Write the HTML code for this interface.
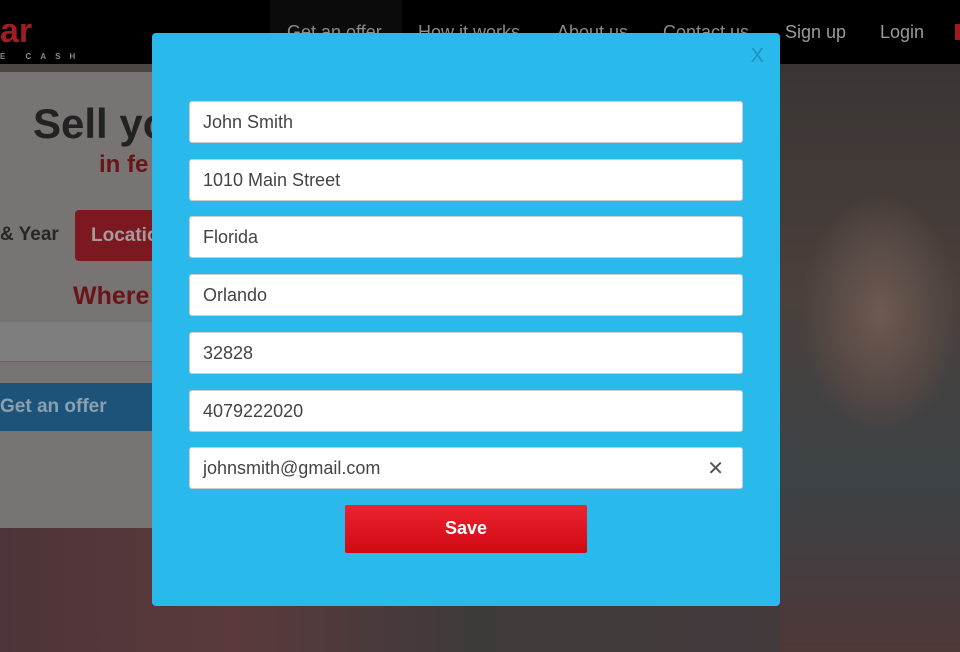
<!DOCTYPE html>
<html><head><meta charset="utf-8"><style>
*{margin:0;padding:0;box-sizing:border-box}
body{width:960px;height:652px;overflow:hidden;position:relative;font-family:"Liberation Sans",Arial,sans-serif;background:#3a3434}
.bg{position:absolute;left:0;top:64px;width:960px;height:588px;background:linear-gradient(180deg,#4b4542 0%,#5a4c48 60%,#4a3536 100%)}
.photo{position:absolute;left:760px;top:64px;width:200px;height:588px;background:radial-gradient(ellipse 80px 120px at 120px 250px,#6e5a50 0%,#574a45 60%,rgba(0,0,0,0) 100%),linear-gradient(180deg,#3a3533 0%,#4a403c 40%,#3c4246 70%,#4e3838 100%)}
.bottom{position:absolute;left:0;top:528px;width:780px;height:124px;background:linear-gradient(90deg,#4e3438 0%,#5a3a3c 30%,#3f3a3a 60%,#433a3c 100%)}
.panel{position:absolute;left:0;top:72px;width:780px;height:456px;background:#777473}
.nav{position:absolute;left:0;top:0;width:960px;height:64px;background:#000}
.nav span{position:absolute;top:22px;font-size:18px;color:#8a8a8a}
.logo{position:absolute;left:0;top:12px;font-size:34px;font-weight:bold;color:#a21c26}
.logo2{position:absolute;left:0;top:52px;font-size:8px;letter-spacing:9px;color:#888;font-weight:bold}
.sell{position:absolute;left:33px;top:100px;font-size:42px;font-weight:bold;color:#222}
.infe{position:absolute;left:99px;top:151px;font-size:24px;font-weight:bold;color:#6a1418}
.year{position:absolute;left:0;top:224px;font-size:19px;font-weight:bold;color:#262626}
.loc{position:absolute;left:75px;top:210px;width:90px;height:51px;background:#7c1820;border-radius:4px;color:#a49c9c;font-size:19px;font-weight:bold;padding:15px 0 0 16px}
.where{position:absolute;left:73px;top:282px;font-size:25px;font-weight:bold;color:#6a1418}
.inp0{position:absolute;left:0;top:322px;width:160px;height:40px;background:#7e7e7e;border-bottom:1px solid #666}
.getoff{position:absolute;left:0;top:383px;width:160px;height:48px;background:#1d5378;color:#8aa0b0;font-size:19px;font-weight:bold;padding:13px 0 0 0}
.modal{position:absolute;left:152px;top:33px;width:628px;height:573px;background:#29b9ea;border-radius:4px}
.x{position:absolute;right:16px;top:12px;color:#1d95c3;font-size:20px}
.f{position:absolute;left:37px;width:554px;height:42px;background:#fff;border:1px solid #ccc;border-radius:3px;font-size:18px;color:#444;padding:10px 0 0 13px}
.clr{position:absolute;right:18px;top:8px;font-size:20px;color:#555}
.save{position:absolute;left:193px;top:472px;width:242px;height:48px;background:linear-gradient(#ec2430,#d00812);border-radius:2px;color:#fff;font-size:18px;font-weight:bold;text-align:center;line-height:46px}
</style></head><body>
<div class="bg"></div><div class="photo"></div><div class="bottom"></div>
<div class="panel"></div>
<div class="nav">
<div class="logo">ar</div><div class="logo2">E CASH</div>
<div style="position:absolute;left:270px;top:0;width:132px;height:64px;background:#0b0b0b"></div>
<span style="left:287px">Get an offer</span><span style="left:418px">How it works</span><span style="left:557px">About us</span><span style="left:663px">Contact us</span><span style="left:785px;color:#9a9a9a">Sign up</span><span style="left:880px;color:#9a9a9a">Login</span>
<div style="position:absolute;left:955px;top:24px;width:8px;height:16px;background:#a01a20"></div>
</div>
<div class="sell">Sell yo</div><div class="infe">in fe</div>
<div class="year">&amp; Year</div><div class="loc">Locatio</div>
<div class="where">Where</div>
<div class="inp0"></div><div class="getoff">Get an offer</div>
<div class="modal">
<div class="x">X</div>
<div class="f" style="top:68px">John Smith</div>
<div class="f" style="top:126px">1010 Main Street</div>
<div class="f" style="top:183px">Florida</div>
<div class="f" style="top:241px">Orlando</div>
<div class="f" style="top:299px">32828</div>
<div class="f" style="top:357px">4079222020</div>
<div class="f" style="top:414px">johnsmith@gmail.com<span class="clr">✕</span></div>
<div class="save">Save</div>
</div>
</body></html>
